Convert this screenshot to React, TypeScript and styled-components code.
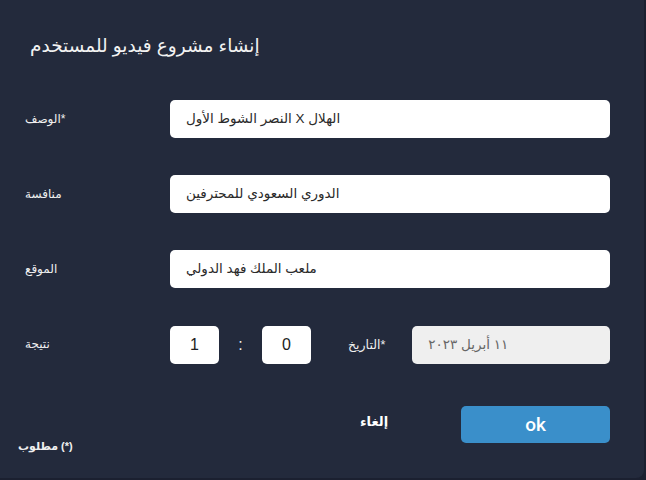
import React from "react";
import styled, { createGlobalStyle } from "styled-components";

const Global = createGlobalStyle`
  html, body { margin: 0; padding: 0; background: #1b2030; }
  body { font-family: "Liberation Sans", "DejaVu Sans", sans-serif; }
  * { box-sizing: border-box; }
`;

const Dialog = styled.div`
  width: 644px;
  height: 478px;
  background: #232a3c;
  border-radius: 0 0 8px 0;
  position: relative;
  padding: 31px 34px 0 25px;
  color: #fff;
`;

const Title = styled.h1`
  margin: 0 0 39px 5px;
  font-size: 18.5px;
  font-weight: normal;
  line-height: 30px;
  color: #f2f2f2;
  direction: rtl;
  text-align: left;
`;

const Form = styled.div`
  display: grid;
  grid-template-columns: 145px 440px;
  row-gap: 37px;
`;

const Label = styled.div`
  font-size: 12px;
  color: #f0f0f0;
  padding-top: 12px;
  height: 38px;
  direction: rtl;
  text-align: left;
`;

const Input = styled.div<{ $muted?: boolean }>`
  height: 38px;
  line-height: 38px;
  background: ${(p) => (p.$muted ? "#efefef" : "#fff")};
  border-radius: 5px;
  padding: 0 16px;
  font-size: 13.5px;
  direction: rtl;
  text-align: left;
  color: ${(p) => (p.$muted ? "#666" : "#2a2a2a")};
`;

const ScoreRow = styled.div`
  display: flex;
  align-items: center;
  margin-top: 1px;
`;

const ScoreBox = styled.div`
  width: 49px;
  height: 38px;
  background: #fff;
  border-radius: 5px;
  display: flex;
  align-items: center;
  justify-content: center;
  font-size: 16px;
  color: #222;
`;

const Colon = styled.div`
  width: 43px;
  text-align: center;
  font-size: 16px;
  color: #eee;
`;

const DateLabel = styled.div`
  font-size: 12.5px;
  color: #f0f0f0;
  margin: 0 27px 0 37px;
  align-self: flex-start;
  padding-top: 11px;
  direction: rtl;
`;

const DateBox = styled(Input)`
  flex: 1;
`;

const Footer = styled.div`
  display: flex;
  align-items: center;
  margin-top: 42px;
  padding-left: 274px;
`;

const Cancel = styled.button`
  flex-shrink: 0;
  background: none;
  border: none;
  color: #fff;
  font-family: inherit;
  font-size: 13px;
  font-weight: bold;
  width: 150px;
  text-align: center;
  padding: 0;
  margin-top: -6px;
`;

const Ok = styled.button`
  flex-shrink: 0;
  width: 149px;
  height: 37px;
  border: none;
  border-radius: 5px;
  background: #3a8fca;
  color: #fff;
  font-family: Roboto, "Liberation Sans", sans-serif;
  font-size: 19px;
  font-weight: 500;
  margin-left: 12px;
`;

const Required = styled.div`
  position: absolute;
  left: 18px;
  top: 440px;
  font-size: 11px;
  font-weight: bold;
  color: #f0f0f0;
  direction: rtl;
`;

export default function App() {
  return (
    <>
      <Global />
      <Dialog>
        <Title>إنشاء مشروع فيديو للمستخدم</Title>
        <Form>
          <Label>*الوصف</Label>
          <Input>الهلال X النصر الشوط الأول</Input>
          <Label>منافسة</Label>
          <Input>الدوري السعودي للمحترفين</Input>
          <Label>الموقع</Label>
          <Input>ملعب الملك فهد الدولي</Input>
          <Label>نتيجة</Label>
          <ScoreRow>
            <ScoreBox>1</ScoreBox>
            <Colon>:</Colon>
            <ScoreBox>0</ScoreBox>
            <DateLabel>*التاريخ</DateLabel>
            <DateBox $muted>١١ أبريل ٢٠٢٣</DateBox>
          </ScoreRow>
        </Form>
        <Footer>
          <Cancel>إلغاء</Cancel>
          <Ok>ok</Ok>
        </Footer>
        <Required>(*) مطلوب</Required>
      </Dialog>
    </>
  );
}
